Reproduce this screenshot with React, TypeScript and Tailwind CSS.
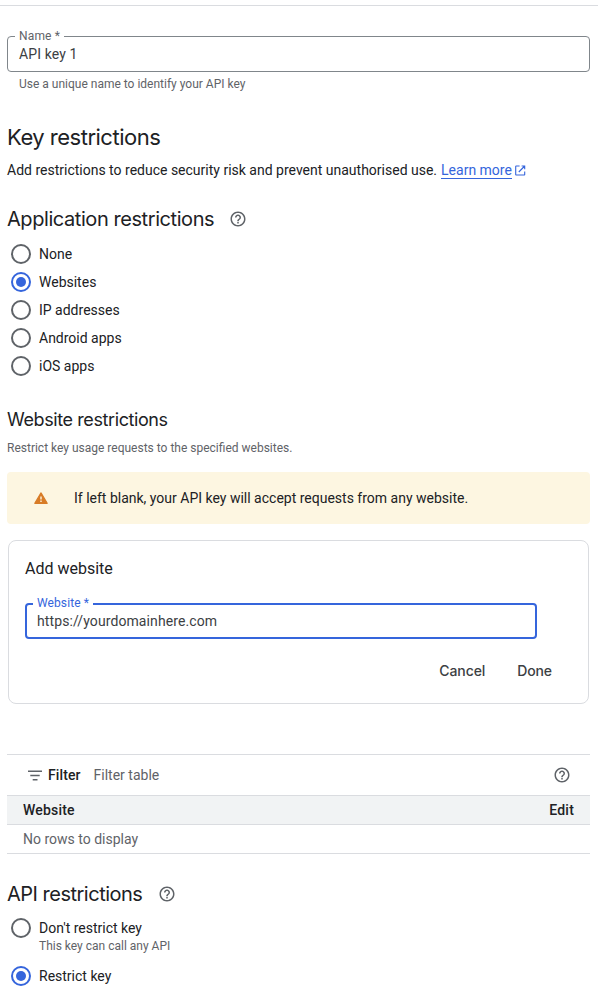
import React from 'react';
import { MdHelpOutline } from 'react-icons/md';

const appOptions = ['None', 'Websites', 'IP addresses', 'Android apps', 'iOS apps'];

const Radio = ({ checked }: { checked?: boolean }) => (
  <span
    className={
      checked
        ? 'flex size-5 shrink-0 items-center justify-center rounded-full border-2 border-[#3565dc]'
        : 'flex size-5 shrink-0 items-center justify-center rounded-full border-2 border-[#5f6368]'
    }
  >
    {checked && <span className="size-2.5 rounded-full bg-[#3565dc]" />}
  </span>
);

const RadioRow = ({ label, checked }: { label: string; checked?: boolean }) => (
  <label className="flex h-7 items-center gap-2 pl-1">
    <Radio checked={checked} />
    <span>{label}</span>
  </label>
);

const HelpIcon = () => <MdHelpOutline size={18} className="shrink-0 text-[#5f6368]" />;

const FilterIcon = () => (
  <svg width="14" height="11" viewBox="0 0 14 11" fill="#5f6368">
    <path d="M0 .5h14V2H0zM2.3 4.8h9.4v1.5H2.3zM4.7 9.1h4.8v1.5H4.7z" />
  </svg>
);

const OpenInNewIcon = () => (
  <svg width="11" height="11" viewBox="0 0 11 11" fill="none" stroke="#3565dc" strokeWidth="1.1">
    <path d="M4.6 1H1.3a.6.6 0 0 0-.6.6v7.8a.6.6 0 0 0 .6.6h7.8a.6.6 0 0 0 .6-.6V6.4M6.6 1h3.1v3.3M9.7 1 3.8 7" />
  </svg>
);

const WarningIcon = () => (
  <svg width="14" height="12" viewBox="0 0 14 12">
    <path d="M7 .9 13.2 11.3H.8z" fill="#d87c27" stroke="#d87c27" strokeWidth="1.2" strokeLinejoin="round" />
    <path d="M6.3 4.6h1.4v3H6.3zM6.3 8.5h1.4v1.4H6.3z" fill="#fdf6e1" />
  </svg>
);

const App = () => {
  return (
    <div className="min-h-[1003px] w-[598px] bg-white pt-[5px] font-['Roboto','Liberation_Sans',sans-serif] text-sm leading-5 text-[#202124]">
      <div className="border-t border-[#dadce0] pt-[30px] pr-2 pl-[7px]">
        <div className="relative flex h-9 items-center rounded-[4px] border border-[#80868b] px-[11px] tracking-[0.1px] text-[#3c4043]">
          <span className="absolute -top-[9px] left-[7px] bg-white px-1 text-xs leading-4 tracking-[0.15px] text-[#5f6368]">Name *</span>
          API key 1
        </div>
        <p className="mt-1 pl-3 text-xs leading-4 text-[#5f6368]">Use a unique name to identify your API key</p>

        <h1 className="mt-[31px] font-['Inter',sans-serif] text-[22px] leading-7 tracking-[-0.5px]">Key restrictions</h1>
        <p className="mt-[9px] flex h-5 items-center">
          Add restrictions to reduce security risk and prevent unauthorised use.
          <a className="ml-1 border-b border-[#3565dc] leading-4 text-[#3565dc]">Learn more</a>
          <span className="ml-[3px]">
            <OpenInNewIcon />
          </span>
        </p>

        <div className="mt-[25px] flex h-7 items-center gap-[15px]">
          <h2 className="font-['Inter',sans-serif] text-xl leading-7 tracking-[-0.43px]">Application restrictions</h2>
          <HelpIcon />
        </div>
        <div className="mt-[7px]">
          {appOptions.map((option) => (
            <RadioRow key={option} label={option} checked={option === 'Websites'} />
          ))}
        </div>

        <h3 className="mt-7 font-['Inter',sans-serif] text-lg leading-6 tracking-[-0.4px]">Website restrictions</h3>
        <p className="mt-2 text-xs leading-4 text-[#5f6368]">Restrict key usage requests to the specified websites.</p>

        <div className="mt-4 flex h-[52px] items-center rounded bg-[#fdf6e1] pl-[27px]">
          <WarningIcon />
          <span className="ml-[26px]">If left blank, your API key will accept requests from any website.</span>
        </div>

        <div className="mx-px mt-4 h-[164px] rounded-lg border border-[#dadce0] px-4 pt-4">
          <h4 className="text-base leading-6">Add website</h4>
          <div className="relative mt-[22px] flex h-9 w-[512px] items-center rounded-[4px] border-2 border-[#3565dc] px-2.5 tracking-[0.1px] text-[#3c4043]">
            <span className="absolute -top-2.5 left-1.5 bg-white px-1 text-xs leading-4 tracking-[0.1px] text-[#3565dc]">Website *</span>
            https://yourdomainhere.com
          </div>
          <div className="mt-[22px] flex justify-end gap-8 pr-5 font-['Inter',sans-serif] font-medium tracking-[-0.1px] text-[#3c4043]">
            <button>Cancel</button>
            <button>Done</button>
          </div>
        </div>

        <div className="mt-[50px] border-y border-[#dadce0]">
          <div className="flex h-10 items-center pr-[19px] pl-[21px]">
            <FilterIcon />
            <span className="ml-1.5 font-medium tracking-[0.1px]">Filter</span>
            <span className="ml-[13px] grow text-[#5f6368]">Filter table</span>
            <HelpIcon />
          </div>
          <div className="flex h-[30px] items-center justify-between border-y border-[#dadce0] bg-[#f1f3f4] px-4 font-medium tracking-[0.2px]">
            <span>Website</span>
            <span>Edit</span>
          </div>
          <div className="flex h-7 items-center px-4 text-[#5f6368]">No rows to display</div>
        </div>

        <div className="mt-[26px] flex h-7 items-center gap-4">
          <h2 className="font-['Inter',sans-serif] text-xl leading-7 tracking-[-0.5px]">API restrictions</h2>
          <HelpIcon />
        </div>
        <div className="mt-1.5">
          <RadioRow label="Don't restrict key" />
          <p className="-mt-1 mb-2 pl-8 text-xs leading-4 text-[#5f6368]">This key can call any API</p>
          <RadioRow label="Restrict key" checked />
        </div>
      </div>
    </div>
  );
};

export default App;
